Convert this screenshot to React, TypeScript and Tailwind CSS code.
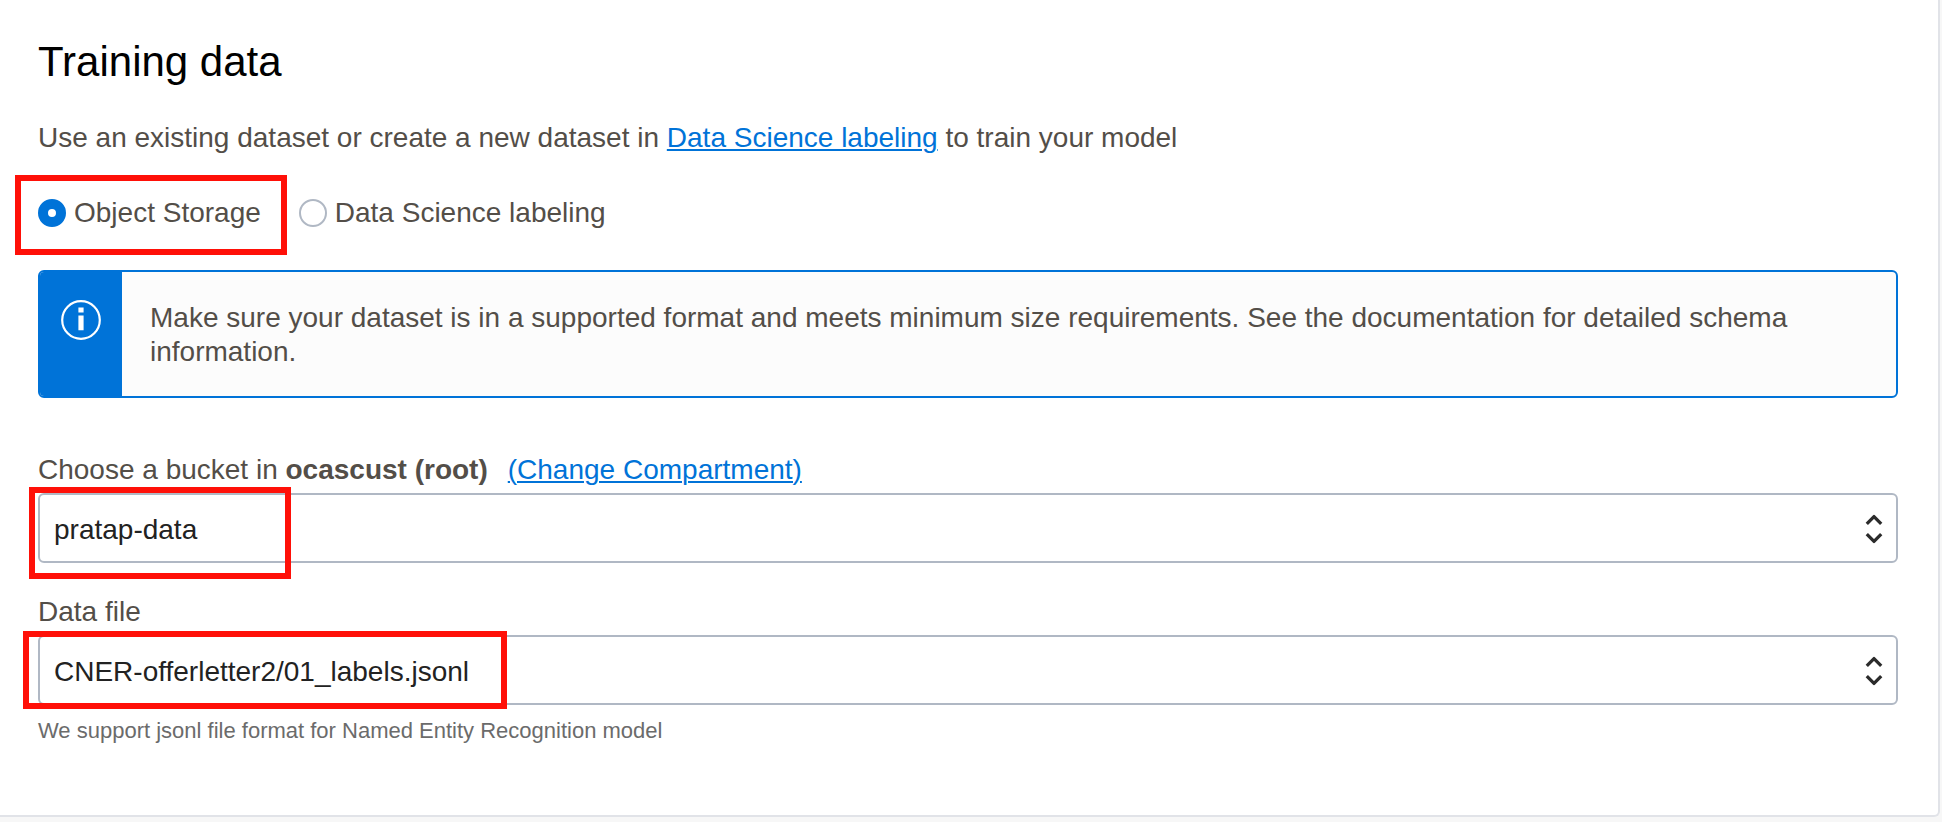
import { useState } from "react";
import type { ReactNode } from "react";

const linkClass =
  "text-[#0073d8] underline decoration-2 underline-offset-2 hover:text-[#005bb0]";

function Radio({
  id,
  label,
  checked,
  onSelect,
}: {
  id: string;
  label: string;
  checked: boolean;
  onSelect: () => void;
}) {
  return (
    <div className="flex items-center gap-2">
      <input
        id={id}
        type="radio"
        name="data-source"
        checked={checked}
        onChange={onSelect}
        className="size-7 shrink-0 appearance-none rounded-full border-2 border-[#b0b8c4] bg-white checked:border-10 checked:border-[#0073d8]"
      />
      <label htmlFor={id}>{label}</label>
    </div>
  );
}

function SelectBox({ id, value }: { id: string; value: string }) {
  return (
    <div className="relative">
      <select
        id={id}
        defaultValue={value}
        className="block h-[70px] w-full appearance-none rounded-md border-2 border-[#b0b8c4] bg-white pt-1 pr-16 pl-3.5 text-[#222222]"
      >
        <option value={value}>{value}</option>
      </select>
      <svg
        aria-hidden="true"
        viewBox="0 0 20 32"
        fill="none"
        stroke="#2b2b2b"
        strokeWidth="3.3"
        strokeLinejoin="round"
        className="pointer-events-none absolute top-5 right-3.5 h-8 w-5"
      >
        <path d="M2.8 10.8 L10 3.6 L17.2 10.8" />
        <path d="M2.8 21.2 L10 28.4 L17.2 21.2" />
      </svg>
    </div>
  );
}

function Highlight({ className }: { className: string }) {
  return (
    <div
      aria-hidden="true"
      className={`pointer-events-none absolute border-6 border-[#ff1008] ${className}`}
    />
  );
}

function InfoBanner({ children }: { children: ReactNode }) {
  return (
    <div
      role="note"
      className="mt-10 flex overflow-hidden rounded-md border-2 border-[#0073d8] bg-[#fcfcfc]"
    >
      <div className="flex w-[82px] shrink-0 justify-center bg-[#0073d8] pt-7">
        <svg aria-hidden="true" viewBox="0 0 40 40" fill="none" className="size-10">
          <circle cx="20" cy="20" r="18.8" stroke="white" strokeWidth="2.2" />
          <path d="M17.4 7.6h5.2v4.8h-5.2zM17.4 15.4h5.2v14.8h-5.2z" fill="white" />
        </svg>
      </div>
      <p className="px-7 pt-[29px] pb-[27px]">{children}</p>
    </div>
  );
}

export default function App() {
  const [source, setSource] = useState("object-storage");

  return (
    <div className="min-h-screen bg-[#f7f7f7] pr-0.5 font-['Liberation_Sans',Arial,sans-serif] text-[28px] leading-[34px] text-[#534e48]">
      <main className="rounded-br-md border-r-2 border-b-2 border-[#e1e3e8] bg-white pt-[38px] pr-10 pb-[70px] pl-[38px]">
        <h1 className="text-[42px] leading-[48px] text-black">Training data</h1>
        <p className="mt-[35px]">
          Use an existing dataset or create a new dataset in{" "}
          <a href="#labeling" className={linkClass}>
            Data Science labeling
          </a>{" "}
          to train your model
        </p>

        <div role="radiogroup" aria-label="Data source" className="mt-[41px] flex gap-[38px]">
          <div className="relative">
            <Radio
              id="object-storage"
              label="Object Storage"
              checked={source === "object-storage"}
              onSelect={() => setSource("object-storage")}
            />
            <Highlight className="-top-[21px] -right-[26px] -bottom-[25px] -left-[23px]" />
          </div>
          <Radio
            id="data-science"
            label="Data Science labeling"
            checked={source === "data-science"}
            onSelect={() => setSource("data-science")}
          />
        </div>

        <InfoBanner>
          Make sure your dataset is in a supported format and meets minimum size
          requirements. See the documentation for detailed schema information.
        </InfoBanner>

        <div className="mt-[55px]">
          <div className="flex gap-5">
            <label htmlFor="bucket">
              Choose a bucket in <strong>ocascust (root)</strong>
            </label>
            <a href="#compartment" className={linkClass}>
              (Change Compartment)
            </a>
          </div>
          <div className="relative mt-1.5">
            <SelectBox id="bucket" value="pratap-data" />
            <Highlight className="-top-1.5 -bottom-4 -left-[9px] w-[262px]" />
          </div>
        </div>

        <div className="mt-8">
          <label htmlFor="data-file" className="block">
            Data file
          </label>
          <div className="relative mt-1.5">
            <SelectBox id="data-file" value="CNER-offerletter2/01_labels.jsonl" />
            <Highlight className="-top-1 -bottom-1 -left-[15px] w-[484px]" />
          </div>
          <p className="mt-3 text-[22px] leading-7 text-[#6b6b6b]">
            We support jsonl file format for Named Entity Recognition model
          </p>
        </div>
      </main>
    </div>
  );
}
